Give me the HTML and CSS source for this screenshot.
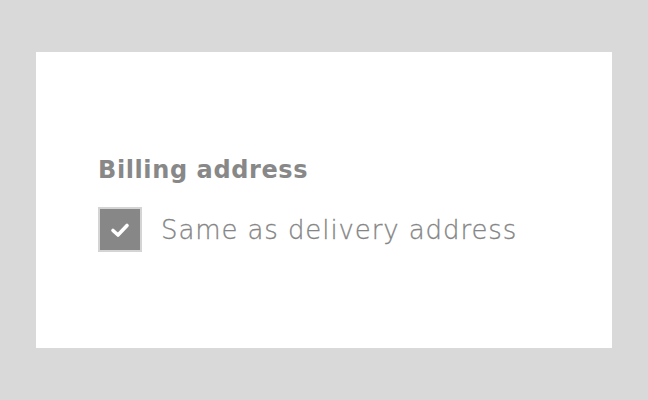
FILE: index.html
```html
<!DOCTYPE html>
<html>
<head>
<meta charset="utf-8">
<link rel="stylesheet" href="styles.css">
</head>
<body>
<div class="card">
  <h2 class="title">Billing address</h2>
  <label class="check-row">
    <span class="box">
      <svg width="20" height="16" viewBox="0 0 20 16"><path d="M3 8.5 L8 13 L17 3.5" fill="none" stroke="#fff" stroke-width="3.6" stroke-linecap="round" stroke-linejoin="round"/></svg>
    </span>
    <span class="label">Same as delivery address</span>
  </label>
</div>
</body>
</html>
```
FILE: styles.css
```css
html, body {
  margin: 0;
  padding: 0;
}
body {
  background: #d9d9d9;
  width: 648px;
  height: 400px;
  padding: 52px 36px;
  box-sizing: border-box;
  font-family: "DejaVu Sans", sans-serif;
}
.card {
  background: #fff;
  height: 296px;
  box-sizing: border-box;
  padding: 100px 0 0 62px;
}
.title {
  margin: 0;
  font-size: 24px;
  font-weight: 700;
  color: #888;
  line-height: 36px;
  letter-spacing: 0.6px;
}
.check-row {
  display: flex;
  align-items: center;
  gap: 19px;
  margin-top: 19px;
}
.box {
  width: 44px;
  height: 45px;
  box-sizing: border-box;
  border: 2px solid #d4d4d4;
  background: #878787;
  display: flex;
  align-items: center;
  justify-content: center;
}
.label {
  font-size: 26px;
  font-weight: 200;
  color: #858585;
  -webkit-text-stroke: 0.3px #858585;
  letter-spacing: 0.9px;
  line-height: 36px;
}
```
